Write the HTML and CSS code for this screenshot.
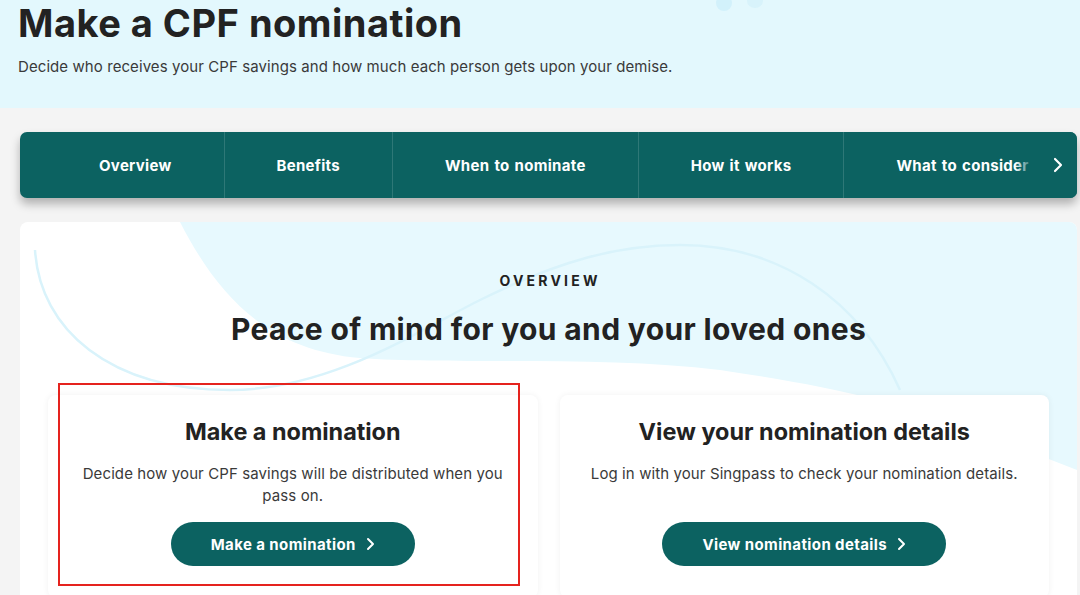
FILE: index.html
```html
<!DOCTYPE html>
<html lang="en">
<head>
<meta charset="utf-8">
<title>Make a CPF nomination</title>
<link rel="stylesheet" href="styles.css">
</head>
<body>
<header class="hero">
  <svg class="hero-deco" width="80" height="16" viewBox="0 0 80 16" aria-hidden="true">
    <ellipse cx="12" cy="3" rx="8" ry="8" fill="#d2f1fb"/>
    <ellipse cx="43" cy="1" rx="8" ry="7" fill="#d8f3fb"/>
  </svg>
  <h1 class="hero-title">Make a CPF nomination</h1>
  <p class="hero-sub">Decide who receives your CPF savings and how much each person gets upon your demise.</p>
</header>

<main class="main">
  <nav class="tabs">
    <div class="tab-track">
      <a class="tab">Overview</a>
      <a class="tab">Benefits</a>
      <a class="tab">When to nominate</a>
      <a class="tab">How it works</a>
      <a class="tab">What to consider</a>
    </div>
    <span class="tab-next">
      <svg width="10" height="16" viewBox="0 0 10 16" aria-hidden="true"><path d="M2 2l6 6-6 6" fill="none" stroke="#fff" stroke-width="2.2" stroke-linecap="round" stroke-linejoin="round"/></svg>
    </span>
  </nav>

  <section class="panel">
    <svg class="panel-deco" width="1057" height="400" viewBox="0 0 1057 400" aria-hidden="true">
      <path d="M160,0 C200,78 250,128 340,136 C430,143 580,133 700,148 C800,163 880,178 980,218 L1057,248 L1057,0 Z" fill="#e7f9fe"/>
      <path d="M15,28 C20,108 90,168 210,168 C310,168 400,108 460,78 C540,38 600,23 660,23 C760,23 840,78 880,168" fill="none" stroke="#d9f3fb" stroke-width="2.5"/>
    </svg>
    <div class="panel-body">
      <div class="eyebrow">OVERVIEW</div>
      <h2 class="panel-title">Peace of mind for you and your loved ones</h2>
      <div class="cards">
        <div class="card">
          <span class="annot"></span>
          <h3 class="card-title">Make a nomination</h3>
          <p class="card-text">Decide how your CPF savings will be distributed when you pass on.</p>
          <a class="btn">Make a nomination
            <svg width="9" height="14" viewBox="0 0 9 14" aria-hidden="true"><path d="M2 2l5 5-5 5" fill="none" stroke="#fff" stroke-width="2" stroke-linecap="round" stroke-linejoin="round"/></svg>
          </a>
        </div>
        <div class="card">
          <h3 class="card-title">View your nomination details</h3>
          <p class="card-text">Log in with your Singpass to check your nomination details.</p>
          <a class="btn">View nomination details
            <svg width="9" height="14" viewBox="0 0 9 14" aria-hidden="true"><path d="M2 2l5 5-5 5" fill="none" stroke="#fff" stroke-width="2" stroke-linecap="round" stroke-linejoin="round"/></svg>
          </a>
        </div>
      </div>
    </div>
  </section>
</main>
</body>
</html>
```

FILE: styles.css
```css
* { box-sizing: border-box; }

html, body {
  margin: 0;
  padding: 0;
}

body {
  font-family: Inter, "Open Sans", "Liberation Sans", sans-serif;
  color: #222;
  background: #f4f4f4;
  overflow: hidden;
}

.hero {
  position: relative;
  height: 108px;
  padding: 4px 18px 0;
  background: #e3f8fd;
}

.hero-deco {
  position: absolute;
  left: 712px;
  top: 0;
}

.hero-title {
  margin: 0;
  font-size: 38px;
  line-height: 38px;
  font-weight: 700;
  color: #222;
  letter-spacing: 0.5px;
}

.hero-sub {
  margin: 14px 0 0;
  font-size: 15px;
  line-height: 22px;
  color: #3a3a3a;
  letter-spacing: 0.08px;
}

.main {
  padding: 24px 3px 0 20px;
}

.tabs {
  position: relative;
  height: 66px;
  background: #0c6261;
  border-radius: 7px;
  box-shadow: 0 6px 10px rgba(0, 0, 0, 0.28);
  overflow: hidden;
}

.tab-track {
  display: flex;
  height: 100%;
  padding-left: 27px;
  white-space: nowrap;
}

.tab {
  display: flex;
  align-items: center;
  padding: 0 52px;
  color: #fff;
  font-size: 15px;
  font-weight: 700;
  letter-spacing: 0.3px;
  word-spacing: 1.2px;
  border-left: 1px solid rgba(255, 255, 255, 0.14);
}

.tab:first-child {
  border-left: none;
}

.tab-next {
  position: absolute;
  right: 0;
  top: 0;
  bottom: 0;
  width: 62px;
  display: flex;
  align-items: center;
  justify-content: flex-end;
  padding-right: 14px;
  background: linear-gradient(to right, rgba(12, 98, 97, 0) 0%, #0c6261 30%);
}

.panel {
  position: relative;
  margin-top: 24px;
  background: #fff;
  border-radius: 8px;
  overflow: hidden;
  height: 400px;
}

.panel-deco {
  position: absolute;
  left: 0;
  top: 0;
}

.panel-body {
  position: relative;
  padding: 49px 28px 0;
}

.eyebrow {
  text-align: center;
  font-size: 14px;
  line-height: 20px;
  font-weight: 700;
  letter-spacing: 3.2px;
  text-indent: 3.2px;
  color: #222;
}

.panel-title {
  margin: 19px 0 0;
  text-align: center;
  font-size: 30px;
  line-height: 38px;
  font-weight: 700;
  letter-spacing: 0.35px;
  color: #222;
}

.cards {
  display: grid;
  grid-template-columns: 1fr 1fr;
  gap: 22px;
  margin-top: 47px;
}

.card {
  position: relative;
  display: flex;
  flex-direction: column;
  align-items: center;
  padding: 21px 28px 32px;
  background: #fff;
  border-radius: 8px;
  box-shadow: 0 0 6px rgba(0, 0, 0, 0.06);
  text-align: center;
}

.card-title {
  margin: 0;
  font-size: 23.4px;
  line-height: 32px;
  font-weight: 700;
  color: #222;
}

.card-text {
  margin: 15px 0 15px;
  font-size: 15px;
  line-height: 22px;
  letter-spacing: 0.1px;
  color: #3a3a3a;
}

.btn {
  margin-top: auto;
  display: inline-flex;
  align-items: center;
  gap: 10px;
  height: 44px;
  padding: 0 40px;
  border-radius: 22px;
  background: #0c6261;
  color: #fff;
  font-size: 15px;
  font-weight: 700;
  letter-spacing: 0.4px;
}

.annot {
  position: absolute;
  left: 10px;
  top: -12px;
  width: 462px;
  height: 203px;
  border: 2px solid #e5231e;
  pointer-events: none;
}
```
